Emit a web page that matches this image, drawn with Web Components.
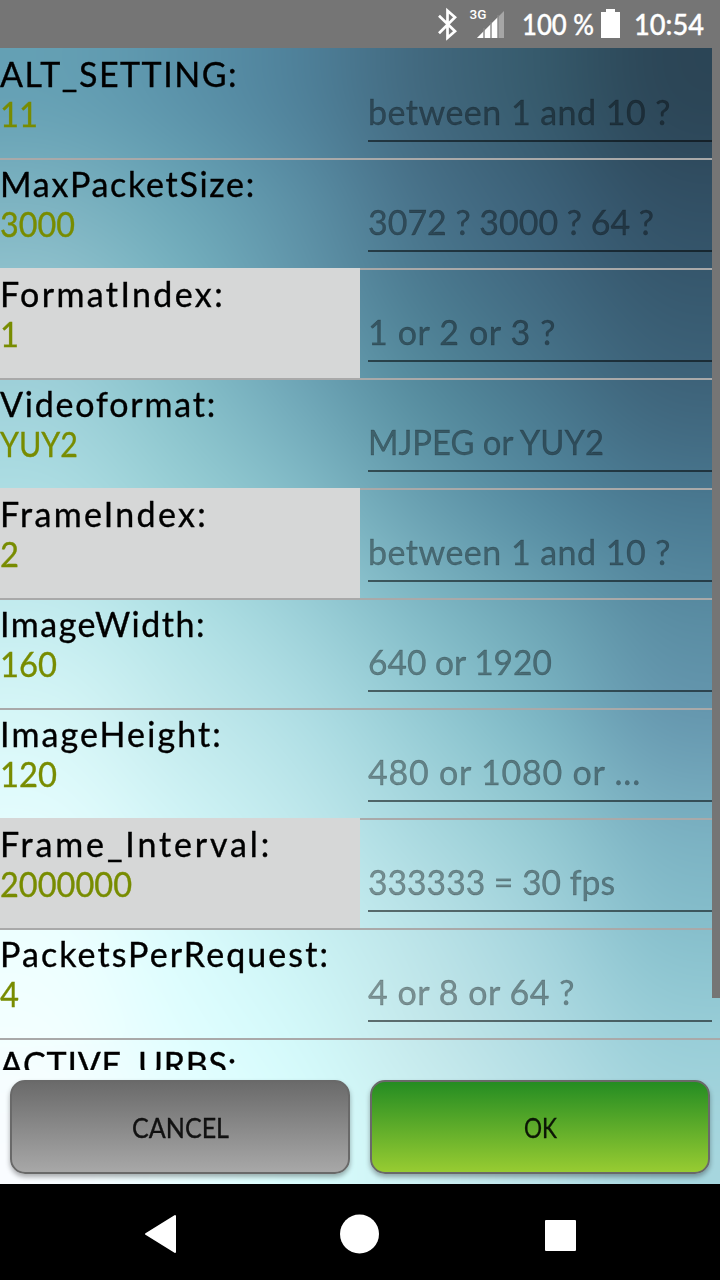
<!DOCTYPE html>
<html lang="en"><head><meta charset="utf-8"><title>Camera settings</title>
<style>html,body{margin:0;padding:0;height:100%;overflow:hidden;background:#000}</style></head>
<body><settings-screen></settings-screen>
<script>
const make=(name,html,init)=>customElements.define(name,class extends HTMLElement{
  constructor(){super();const t=document.createElement('template');t.innerHTML=html;this.attachShadow({mode:'open'}).append(t.content.cloneNode(true))}
  connectedCallback(){init&&init.call(this,this.shadowRoot)}
});
/* Text fitted to a width: tracked out when short, condensed when long */
make('fit-text',`<style>:host{display:block;white-space:pre}span{display:inline-block;transform-origin:0 50%;-webkit-text-stroke:.35px currentColor}</style><span></span>`,function(r){
  const s=r.querySelector('span');s.textContent=this.getAttribute('text');
  const want=+this.getAttribute('w'),have=s.getBoundingClientRect().width;
  if(want>=have)s.style.letterSpacing=(want-have)/s.textContent.length+'px';
  else{s.style.transform='scaleX('+want/have+')';this.style.width=want+'px'}
});
/* Soft colour wash built from a coarse grid */
make('sky-wash',`<style>:host{display:block;overflow:hidden}canvas{display:block;width:100%;height:100%}</style><canvas></canvas>`,function(r){
  const rows=[
   '65a0b4 5b93aa 4f819a 42697f 365a6c 2c4657',
   '7db3c1 6ba6b7 5b8fa5 48728a 3c6179 325065',
   '93c5d0 7ab5c2 6499ad 4d7e93 426b82 385b71',
   'a1d3db 8ac3cc 72aaba 588fa1 4a7a90 40677e',
   'afdfe4 9bd1d7 86bfca 6ba2b3 568ca2 4b7b93',
   'c4ecef b2e2e6 9dd1d9 82bbc7 6da5b5 5a8da3',
   'd6f6f7 c3eaed b0dfe5 96ccd5 7cb6c4 6799b0',
   'e3fcfd d0f4f6 bfe8ec a8d8df 92c8d1 7ab0c1',
   'ecffff dafbfc caf1f3 bae3e8 a3d3dc 87bfcc',
   'f2ffff e0feff d2f8f9 c4e8eb afdbe2 98cdd7',
   'f8fcff e8feff d8fdfd cdf0f2 bbe2e8 a6d6de'].map(x=>x.split(' '));
  const src=document.createElement('canvas');src.width=6;src.height=11;const g=src.getContext('2d');
  rows.forEach((row,y)=>row.forEach((c,x)=>{g.fillStyle='#'+c;g.fillRect(x,y,1,1)}));
  const c=r.querySelector('canvas');c.width=720;c.height=1136;const d=c.getContext('2d');
  d.imageSmoothingEnabled=true;d.imageSmoothingQuality='high';d.drawImage(src,0,0,720,1136);
});
make('status-bar',`<style>:host{display:flex;height:48px;background:#757575;color:#fff;font:500 28px/48px Lato,sans-serif;justify-content:flex-end;box-sizing:border-box;padding-right:16px}svg{display:block;flex:none}.p{margin-left:17px}.b{margin-left:7px}.t{margin-left:14px}</style>
<svg width="68" height="48" viewBox="437 0 68 48"><path d="M439 15.5 455 31 447.5 37.5V10.5L455 17 439 33" transform="translate(0 .2)" fill="none" stroke="#fff" stroke-width="2.7"/><text x="469.5" y="19" font-family="Roboto,sans-serif" font-size="13.5" font-weight="500" fill="#fff" textLength="17">3G</text><path d="M477 38 504 11V38Z" fill="#a6a6a6"/><path d="M477 38 498 17V38Z" fill="#fff"/><path d="M484 28V38M491 22V38M498 15V38" stroke="#858585" stroke-width="1.4"/></svg>
<fit-text class="p" text="100 %" w="72"></fit-text>
<svg class="b" width="19" height="48"><path d="M0 12H5V9H14V12H19V38H0Z" fill="#fff"/></svg>
<fit-text class="t" text="10:54" w="70"></fit-text>`);
make('setting-row',`<style>:host{display:grid;grid-template-columns:360px 352px;height:108px;border-bottom:2px solid #a9a9a9;width:712px;font:34px/40px Lato,sans-serif;flex:none}
:host([last]){width:720px}
.l{padding-top:4px;color:#000}:host([hot]) .l{background:#d6d7d7;box-shadow:0 -2px #d6d7d7}.v{color:#788c00}
.i{margin:0 0 16px 8px;border-bottom:2px solid rgba(0,0,0,.54);color:rgba(0,0,0,.38);padding-top:42px;}</style>
<div class="l"><fit-text class="n"></fit-text><fit-text class="v"></fit-text></div><div class="i"><fit-text class="h"></fit-text></div>`,function(r){
  for(const k of ['n','v','h']){const [t,w]=(this.getAttribute(k)||'').split('|');const e=r.querySelector('.'+k);
   if(!t){(k==='h'?e.parentNode:e).remove();continue}
   const f=document.createElement('fit-text');f.className=k;f.setAttribute('text',t);f.setAttribute('w',w);e.replaceWith(f)}
});
make('soft-button',`<style>:host{display:flex;align-items:center;justify-content:center;box-sizing:border-box;height:94px;border:2px solid #696969;border-radius:15px;background:linear-gradient(var(--a),var(--b));background-origin:border-box;box-shadow:0 3px 5px rgba(0,0,0,.32);color:rgba(0,0,0,.87);font:27px/40px Lato,sans-serif;padding-top:2px}</style><slot></slot>`);
make('nav-bar',`<style>:host{display:block;height:96px;background:#000}svg{display:block}</style><svg width="720" height="96" viewBox="0 1184 720 96" fill="#fff" stroke="#fff" stroke-linejoin="round"><path d="M146 1234 175 1216V1252Z" stroke-width="2"/><circle cx="359.5" cy="1234" r="19.5" stroke="none"/><rect x="546" y="1221" width="29" height="29" stroke-width="2"/></svg>`);
make('settings-screen',`<style>:host{display:flex;flex-direction:column;width:720px;height:1280px}
main{height:1136px;position:relative;display:flex;flex-direction:column}
sky-wash{position:absolute;inset:0}
.list{position:relative;box-sizing:border-box;height:1022px;padding-top:2px;overflow:hidden;display:flex;flex-direction:column}
.thumb{position:absolute;right:0;top:0;width:8px;height:950px;background:#757575}
.actions{position:relative;display:grid;grid-template-columns:1fr 1fr;gap:20px;padding:10px}
.c{--a:#696969;--b:#a9a9a9}.o{--a:#228b22;--b:#9acd32}</style>
<status-bar></status-bar><main><sky-wash></sky-wash><div class="list">
<setting-row n="ALT_SETTING:|238" v="11|38" h="between 1 and 10 ?|303"></setting-row>
<setting-row n="MaxPacketSize:|256" v="3000|75" h="3072 ? 3000 ? 64 ?|286"></setting-row>
<setting-row hot n="FormatIndex:|225" v="1|19" h="1 or 2 or 3 ?|188"></setting-row>
<setting-row n="Videoformat:|217" v="YUY2|78" h="MJPEG or YUY2|236"></setting-row>
<setting-row hot n="FrameIndex:|208" v="2|19" h="between 1 and 10 ?|303"></setting-row>
<setting-row n="ImageWidth:|206" v="160|57" h="640 or 1920|184"></setting-row>
<setting-row n="ImageHeight:|223" v="120|57" h="480 or 1080 or ...|273"></setting-row>
<setting-row hot n="Frame_Interval:|272" v="2000000|132" h="333333 = 30 fps|247"></setting-row>
<setting-row last n="PacketsPerRequest:|330" v="4|19" h="4 or 8 or 64 ?|207"></setting-row>
<setting-row n="ACTIVE_URBS:|237"></setting-row>
<div class="thumb"></div></div>
<div class="actions"><soft-button class="c"><fit-text text="CANCEL" w="97"></fit-text></soft-button><soft-button class="o"><fit-text text="OK" w="33"></fit-text></soft-button></div></main><nav-bar></nav-bar>`);
</script></body></html>
